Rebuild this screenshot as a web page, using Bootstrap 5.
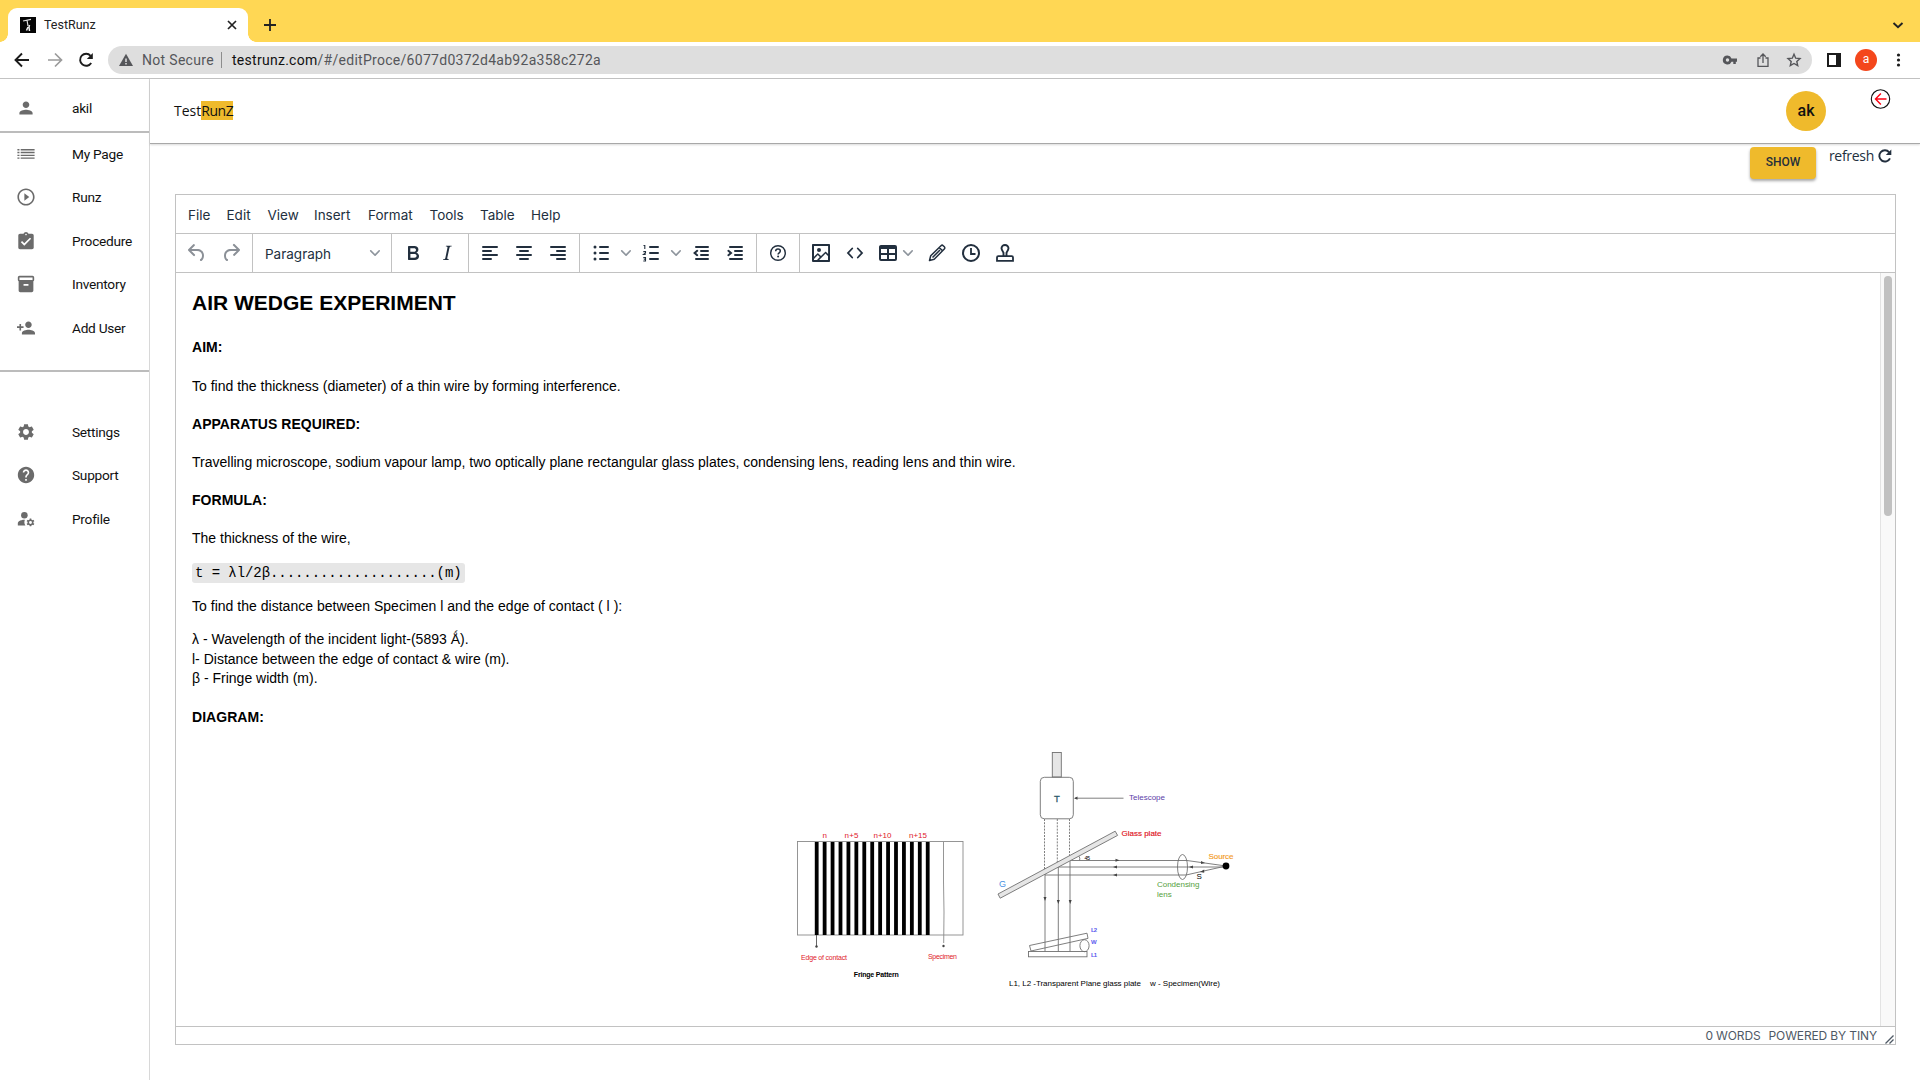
<!DOCTYPE html>
<html lang="en">
<head>
<meta charset="utf-8">
<title>TestRunz</title>
<link href="https://cdn.jsdelivr.net/npm/bootstrap@5.3.0/dist/css/bootstrap.min.css" rel="stylesheet">
<style>
body{width:1920px;height:1080px;overflow:hidden;background:#fff;color:#111;font-family:Roboto,sans-serif;font-size:14px;line-height:20px}
svg{display:block;flex:none;overflow:visible}
span,a{white-space:nowrap}
.tabstrip{height:42px;background:#ffd754;padding:8px 17px 0 8px}
.browser-tab{width:240px;height:34px;background:#fff;border-radius:9px 9px 0 0;padding:0 10px 0 12px;font-size:12.5px;position:relative}
.browser-tab::before,.browser-tab::after{content:"";position:absolute;bottom:0;width:8px;height:8px}
.browser-tab::before{left:-8px;background:radial-gradient(circle at 0 0,transparent 7.5px,#fff 8px)}
.browser-tab::after{right:-8px;background:radial-gradient(circle at 100% 0,transparent 7.5px,#fff 8px)}
.tab-name{margin-left:8px;color:#222}
.new-tab{margin:11px 0 0 16px}
.tab-search{margin-top:12px}
.urlbar{height:37px;border-bottom:1px solid #c3c3c3;padding:0 17px 0 14px}
.nav-fwd{margin-left:17px}
.nav-reload{margin-left:15px}
.pill{height:28px;width:1704px;margin-left:14px;background:#dedede;border-radius:14px;padding:0 11px;color:#55565a;margin-bottom:1px}
.pill .sep{width:1px;height:16px;background:#8d8d8d;margin:0 10px 0 7px}
.pill b{font-weight:400;color:#111}
.insecure{margin-left:9px;letter-spacing:.31px}
.address{letter-spacing:.28px}
.ico-share{margin-left:20px}
.ico-star{margin-left:18px}
.ico-panel{margin-left:15px}
.chrome-user{width:22px;height:22px;margin-left:14px;background:#f4471c;color:#fff;font-size:12px;line-height:21px}
.sidebar{width:150px;border-right:1px solid #d8d8d8}
.sidebar .item{height:43.5px;padding-left:17px;font-size:13.7px;letter-spacing:-.27px}
.sidebar .item svg{width:18px;height:18px;fill:#6b6b6b;margin-right:37px}
.sidebar .item.owner{height:52px;padding-top:6px}
.rule{height:2px;background:#bcbcbc;margin-bottom:-1px}
.rule.split{margin:20px 0 38.500px}
.topbar{height:65px;border-bottom:1px solid #a8a8a8;box-shadow:0 1px 2px rgba(0,0,0,.15);padding:0 29px 0 24px}
.brand{font-family:"Open Sans",sans-serif;color:#111;margin-top:22px}
.brand i{font-style:normal;background:#efba2c;display:inline-block;line-height:19px;letter-spacing:-.45px}
.ak{width:40px;height:40px;margin-top:12px;background:#efba2c;color:#111;font-size:16px;font-weight:500;line-height:39px;margin-right:45px}
.leave{margin:10px 1px 0 0}
.actions{height:50px;padding:3px 28px 0 0}
.show-btn{width:66px;height:32px;padding:0;border:0;border-radius:4px;background:#efba2c;color:#27303a;font-size:12px;font-weight:500;line-height:29px;padding-bottom:2px;margin-right:13px;box-shadow:0 2px 3px rgba(0,0,0,.35)}
.refresh{color:#222f3e;font-family:"Open Sans",sans-serif;height:18px;letter-spacing:-.3px}
.refresh svg{margin-left:4px}
.editor{width:1721px;height:851px;margin-left:25px;border:1px solid #c2c2c2;font-family:Inter,sans-serif;color:#222f3e;font-size:13.5px}
.menus{height:39px;border-bottom:1px solid #c2c2c2;padding:2px 0 0 12px}
.menus span{display:block}
.tools{height:39px;border-bottom:1px solid #c2c2c2}
.tools .grp{border-right:1px solid #c2c2c2}
.tools .grp:last-child{border:0}
.tb{width:34px;display:flex;justify-content:center}
.tb svg{width:24px;height:24px;fill:#222f3e}
.tb .off{fill:#8b9097}
.ln{stroke:#222f3e;stroke-width:2;stroke-linecap:round;fill:none}
.chev{width:16px;display:flex;justify-content:center}
.chev svg{width:10px;height:10px;fill:#8e959d}
.para-name{padding-top:2px}
.doc{font-family:"Liberation Sans",Arial,sans-serif;color:#000;font-size:14px;padding:0 0 0 16px;overflow:hidden}
.doc p,.doc h2,.doc h4{margin:18px 0 0;line-height:20px;font-size:14px}
.doc h4,.doc h2{font-weight:700}
.doc h4{letter-spacing:.04px}
.doc h2{font-size:21px;line-height:28px;margin-top:16px}
.doc .wide{margin-top:19px}
.doc .after-title{margin-top:20px}
.doc .after-code{margin-top:13px;letter-spacing:.02px}
.doc .flush{margin-top:0}
.doc .tight{margin-top:-1px}
.formula{font-family:"Liberation Mono",monospace;background:#e6e6e6;border-radius:3px;height:20px;line-height:21px;padding:0 3px;width:273px;margin-top:15px;letter-spacing:-.07px}
.figure-air{margin:13px 0 0 588px}
.track{width:15px;background:#f9f9f9;border-left:1px solid #e3e3e3;padding:3px 0 0 3px}
.thumb{width:8px;height:240px;border-radius:4px;background:#c1c1c1}
.status{height:18px;border-top:1px solid #c2c2c2;font-size:12px;color:#4f5965;padding-right:1px;line-height:18px;letter-spacing:-.13px}
.status span{margin-right:8px}
.status svg{margin-top:8px}
</style>
</head>
<body class="d-flex flex-column">
<div class="tabstrip d-flex align-items-start">
  <div class="browser-tab d-flex align-items-center">
    <svg width="16" height="16"><rect width="16" height="16" fill="#050505"/><path d="M3 4 L11 2.300 M7 3 L8 9" stroke="#ddd" stroke-width="1.200" fill="none"/><path d="M9.500 8l-.5 2 .5 4M8 10l-1.500 3.500" stroke="#eee" stroke-width="1.500" fill="none"/></svg>
    <span class="tab-name">TestRunz</span>
    <svg class="ms-auto" width="12" height="12"><path d="M2 2l8 8M10 2l-8 8" stroke="#222" stroke-width="1.700"/></svg>
  </div>
  <svg class="new-tab" width="12" height="12"><path d="M6 0v12M0 6h12" stroke="#222" stroke-width="1.800"/></svg>
  <svg class="ms-auto tab-search" width="10" height="10"><path d="M.5 3l4.500 4.300L9.500 3" stroke="#222" stroke-width="1.900" fill="none"/></svg>
</div>
<div class="urlbar d-flex align-items-center">
  <svg width="16" height="16"><path d="M15 8H2M8 1.500L1.500 8L8 14.500" stroke="#1c1c1c" stroke-width="1.900" fill="none"/></svg>
  <svg class="nav-fwd" width="16" height="16"><path d="M1 8h13M8 1.500L14.500 8L8 14.500" stroke="#9b9b9b" stroke-width="1.700" fill="none"/></svg>
  <svg class="nav-reload" width="16" height="16"><path d="M13.200 11a6 6 0 1 1-.6-7.200" stroke="#1c1c1c" stroke-width="1.900" fill="none"/><path d="M14.800 1v6H8.800z" fill="#1c1c1c"/></svg>
  <div class="pill d-flex align-items-center">
    <svg width="14" height="14"><path d="M7 .8L14 13H0z" fill="#55565a"/><path d="M7 5.500v3.500M7 10v1.500" stroke="#dedede" stroke-width="1.500"/></svg>
    <span class="insecure">Not Secure</span><div class="sep"></div>
    <span class="address"><b>testrunz.com</b>/#/editProce/6077d0372d4ab92a358c272a</span>
    <svg class="ms-auto" width="14" height="10"><path fill="#55565a" fill-rule="evenodd" d="M4.500.5a4.500 4.500 0 1 0 4 6.200h1.800V9h2.500V6.700H14V3.500H8.500a4.500 4.500 0 0 0-4-3zm0 2.800a1.700 1.700 0 1 1 0 3.400 1.700 1.700 0 0 1 0-3.400z"/></svg>
    <svg class="ico-share" width="12" height="14"><path d="M3.500 5H1v8.300h10V5H8.500M6 10V1.200M3.300 3.700L6 1l2.700 2.700" stroke="#55565a" stroke-width="1.300" fill="none"/></svg>
    <svg class="ico-star" width="14" height="14"><path d="M7 1.300l1.700 3.900 4.300.4-3.200 2.900.9 4.200L7 10.500l-3.700 2.200.9-4.200L1 5.600l4.300-.4z" stroke="#55565a" stroke-width="1.400" fill="none"/></svg>
  </div>
  <svg class="ico-panel" width="14" height="14"><path fill="#1c1c1c" fill-rule="evenodd" d="M0 0h14v14H0zM2 2v10h7V2z"/></svg>
  <div class="chrome-user rounded-circle text-center">a</div>
  <svg class="ms-auto" width="9" height="14"><g fill="#1c1c1c"><circle cx="4.500" cy="2" r="1.600"/><circle cx="4.500" cy="7" r="1.600"/><circle cx="4.500" cy="12" r="1.600"/></g></svg>
</div>
<div class="d-flex flex-grow-1">
  <nav class="sidebar flex-shrink-0">
    <div class="item owner d-flex align-items-center"><svg viewBox="0 0 24 24"><path d="M12 12c2.210 0 4-1.790 4-4s-1.790-4-4-4-4 1.790-4 4 1.790 4 4 4zm0 2c-2.670 0-8 1.340-8 4v2h16v-2c0-2.660-5.330-4-8-4z" transform="translate(-1.200 -1.200) scale(1.100)"/></svg><span>akil</span></div>
    <div class="rule"></div>
    <div class="item d-flex align-items-center"><svg viewBox="1 1 22 22"><path d="M1.500 6H4v1.700H1.500zm0 3.400H4v1.700H1.500zm0 3.400H4v1.700H1.500zm0 3.400H4v1.700H1.500zM5.500 6h17v1.700h-17zm0 3.400h17v1.700h-17zm0 3.400h17v1.700h-17zm0 3.400h17v1.700h-17z"/></svg><span>My Page</span></div>
    <div class="item d-flex align-items-center"><svg viewBox="1 1 22 22"><path d="M10 16.500l6-4.500-6-4.500v9zM12 1.500C6.200 1.500 1.500 6.200 1.500 12S6.200 22.500 12 22.500 22.500 17.800 22.500 12 17.800 1.500 12 1.500zm0 19c-4.700 0-8.500-3.800-8.500-8.500S7.300 3.500 12 3.500s8.500 3.800 8.500 8.500-3.800 8.500-8.500 8.500z"/></svg><span>Runz</span></div>
    <div class="item d-flex align-items-center"><svg viewBox="2 1 20 21"><path d="M19 3h-4.180C14.400 1.840 13.300 1 12 1c-1.300 0-2.400.84-2.820 2H5c-1.100 0-2 .9-2 2v14c0 1.100.9 2 2 2h14c1.100 0 2-.9 2-2V5c0-1.100-.9-2-2-2zm-7 0c.55 0 1 .45 1 1s-.45 1-1 1-1-.45-1-1 .45-1 1-1zm-2 14l-4-4 1.410-1.410L10 14.170l6.590-6.590L18 9l-8 8z"/></svg><span>Procedure</span></div>
    <div class="item d-flex align-items-center"><svg viewBox="1 1 22 22"><path d="M20 2H4c-1 0-2 .9-2 2v3.010c0 .72.43 1.340 1 1.690V20c0 1.100 1.100 2 2 2h14c.9 0 2-.9 2-2V8.700c.57-.35 1-.97 1-1.690V4c0-1.100-1-2-2-2zm-5 12H9v-2h6v2zm5-7H4V4h16v3z"/></svg><span>Inventory</span></div>
    <div class="item d-flex align-items-center"><svg viewBox="1 1 22 22"><path d="M15 12c2.210 0 4-1.790 4-4s-1.790-4-4-4-4 1.790-4 4 1.790 4 4 4zm-9-2V7H4v3H1v2h3v3h2v-3h3v-2H6zm9 4c-2.670 0-8 1.340-8 4v2h16v-2c0-2.660-5.330-4-8-4z"/></svg><span>Add User</span></div>
    <div class="rule split"></div>
    <div class="item d-flex align-items-center"><svg viewBox="1 1 22 22"><path d="M19.140 12.940c.04-.3.060-.61.060-.94 0-.32-.02-.64-.07-.94l2.030-1.580c.18-.14.230-.41.120-.61l-1.920-3.320c-.12-.22-.37-.29-.59-.22l-2.390.96c-.5-.38-1.030-.7-1.620-.94l-.36-2.540c-.04-.24-.24-.41-.48-.41h-3.840c-.24 0-.43.170-.47.410l-.36 2.540c-.59.240-1.130.57-1.620.94l-2.390-.96c-.22-.08-.47 0-.59.220L2.740 8.870c-.12.210-.08.470.120.610l2.030 1.580c-.05.3-.09.630-.09.940s.02.640.070.940l-2.030 1.580c-.18.140-.23.410-.12.610l1.920 3.320c.12.220.37.290.59.220l2.390-.96c.5.380 1.030.7 1.620.94l.36 2.540c.05.240.24.410.48.410h3.840c.24 0 .44-.17.470-.41l.36-2.540c.59-.24 1.130-.56 1.620-.94l2.390.96c.22.080.47 0 .59-.22l1.920-3.320c.12-.22.070-.47-.12-.61l-2.010-1.580zM12 15.600c-1.980 0-3.600-1.620-3.600-3.600s1.620-3.600 3.600-3.600 3.600 1.620 3.600 3.600-1.620 3.600-3.600 3.600z"/></svg><span>Settings</span></div>
    <div class="item d-flex align-items-center"><svg viewBox="1 1 22 22"><path d="M12 2C6.480 2 2 6.480 2 12s4.480 10 10 10 10-4.480 10-10S17.520 2 12 2zm1 17h-2v-2h2v2zm2.070-7.750l-.9.920C13.450 12.900 13 13.500 13 15h-2v-.5c0-1.100.45-2.100 1.170-2.830l1.240-1.260c.37-.36.590-.86.590-1.410 0-1.100-.9-2-2-2s-2 .9-2 2H8c0-2.210 1.790-4 4-4s4 1.790 4 4c0 .88-.36 1.680-.93 2.250z"/></svg><span>Support</span></div>
    <div class="item d-flex align-items-center"><svg viewBox="1 1 22 22"><circle cx="10" cy="7.500" r="4"/><path d="M10.670 13.020C10.450 13.010 10.230 13 10 13c-2.420 0-4.680.67-6.610 1.820C2.510 15.340 2 16.320 2 17.350V20h9.260A6.960 6.960 0 0 1 10 16c0-1.070.25-2.070.67-2.980z"/><circle cx="17.500" cy="16.300" r="2.700" fill="none" stroke="#6b6b6b" stroke-width="1.900"/><path fill="none" stroke="#6b6b6b" stroke-width="2" d="M17.500 11.500v2M17.500 19v2M13.300 13.900l1.700 1M20 17.700l1.700 1M13.300 18.700l1.700-1M20 14.900l1.700-1"/></svg><span>Profile</span></div>
  </nav>
  <main class="flex-grow-1">
    <div class="topbar d-flex align-items-start">
      <span class="brand">Test<i>RunZ</i></span>
      <div class="ak rounded-circle text-center ms-auto">ak</div>
      <svg class="leave" width="19" height="20"><circle cx="9.500" cy="10" r="9.200" stroke="#111" fill="none" stroke-width="1.100"/><path d="M15.500 10H4.700M9.900 4.600L4.500 10l5.400 5.400" stroke="#f01" stroke-width="1.400" fill="none"/></svg>
    </div>
    <div class="actions d-flex align-items-start justify-content-end">
      <button class="btn show-btn">SHOW</button>
      <div class="refresh d-flex align-items-center"><span>refresh</span><svg width="14" height="14"><path d="M12 9.300a5.600 5.600 0 1 1-.8-6" stroke="#222f3e" stroke-width="1.900" fill="none"/><path d="M13.300.5v5.500H7.800z" fill="#222f3e"/></svg></div>
    </div>
    <section class="editor d-flex flex-column">
      <div class="menus d-flex align-items-center">
        <span style="width:38.500px">File</span><span style="width:41px">Edit</span><span style="width:46.500px">View</span><span style="width:54px">Insert</span><span style="width:61.500px">Format</span><span style="width:50.500px">Tools</span><span style="width:51px">Table</span><span>Help</span>
      </div>
      <div class="tools d-flex">
        <div class="grp d-flex align-items-center justify-content-center" style="width:77px">
          <div class="tb"><svg class="off" viewBox="0 0 24 24"><path d="M6.400 8H12c3.700 0 6.200 2 6.800 5.100.6 2.700-.4 5.600-2.300 6.800a1 1 0 01-1-1.800c1.100-.6 1.800-2.700 1.400-4.600-.5-2.100-2.100-3.500-4.900-3.500H6.400l3.300 3.300a1 1 0 11-1.400 1.400l-5-5a1 1 0 010-1.400l5-5a1 1 0 011.400 1.400L6.400 8z"/></svg></div>
          <div class="tb"><svg class="off" viewBox="0 0 24 24"><path d="M17.600 10H12c-2.800 0-4.400 1.400-4.900 3.500-.4 2 .3 4 1.400 4.600a1 1 0 11-1 1.800c-2-1.200-2.900-4.100-2.300-6.800.6-3 3-5.100 6.800-5.100h5.600l-3.300-3.300a1 1 0 111.400-1.400l5 5a1 1 0 010 1.400l-5 5a1 1 0 01-1.400-1.400l3.300-3.300z"/></svg></div>
        </div>
        <div class="grp d-flex align-items-center justify-content-between" style="width:139px;padding:0 8px 0 12px"><span class="para-name">Paragraph</span><div class="chev"><svg viewBox="0 0 10 10"><path d="M8.700 2.200c.3-.3.8-.3 1 0 .4.4.4.9 0 1.200L5.700 7.800c-.3.3-.9.3-1.200 0L.2 3.400a.8.8 0 010-1.200c.3-.3.8-.3 1.100 0L5 6l3.700-3.800z"/></svg></div></div>
        <div class="grp d-flex align-items-center justify-content-center" style="width:77px">
          <div class="tb"><svg viewBox="0 0 24 24"><path fill-rule="evenodd" d="M7.800 19c-.3 0-.5 0-.6-.2l-.2-.5V5.700c0-.2 0-.4.2-.5l.6-.2h5c1.500 0 2.700.3 3.500 1 .7.600 1.100 1.400 1.100 2.500a3 3 0 01-.6 1.900c-.4.600-1 1-1.600 1.200.4.100.9.300 1.300.6s.8.700 1 1.200c.4.400.5 1 .5 1.600 0 1.300-.4 2.300-1.300 3-.8.700-2.100 1-3.800 1H7.800zm5-8.300c.6 0 1.200-.1 1.600-.5.4-.3.6-.7.6-1.300 0-1.100-.8-1.700-2.300-1.700H9.300v3.500h3.400zm.5 6c.7 0 1.300-.1 1.700-.4.4-.4.6-.9.6-1.500s-.2-1-.7-1.400c-.4-.3-1-.4-2-.4H9.400v3.800h4z"/></svg></div>
          <div class="tb"><svg viewBox="0 0 24 24"><path d="M16.700 4.700l-.1.900h-.3c-.6 0-1 0-1.400.3-.3.300-.4.600-.5 1.100l-2.100 9.800v.6c0 .5.4.8 1.400.8h.2l-.2.800H8l.2-.8h.2c1.100 0 1.800-.5 2-1.500l2-9.800.1-.5c0-.6-.4-.8-1.400-.8h-.3l.2-.9h5.700z"/></svg></div>
        </div>
        <div class="grp d-flex align-items-center justify-content-center" style="width:111px">
          <div class="tb"><svg viewBox="0 0 24 24"><path class="ln" d="M5 6h14M5 10h8M5 14h14M5 18h8"/></svg></div>
          <div class="tb"><svg viewBox="0 0 24 24"><path class="ln" d="M5 6h14M8 10h8M5 14h14M8 18h8"/></svg></div>
          <div class="tb"><svg viewBox="0 0 24 24"><path class="ln" d="M5 6h14M11 10h8M5 14h14M11 18h8"/></svg></div>
        </div>
        <div class="grp d-flex align-items-center" style="width:177px;padding-left:4px">
          <div class="tb"><svg viewBox="0 0 24 24"><path class="ln" d="M11 6h8M11 12h8M11 18h8"/><circle cx="6" cy="6" r="1.500"/><circle cx="6" cy="12" r="1.500"/><circle cx="6" cy="18" r="1.500"/></svg></div>
          <div class="chev"><svg viewBox="0 0 10 10"><path d="M8.700 2.200c.3-.3.8-.3 1 0 .4.4.4.9 0 1.200L5.700 7.800c-.3.3-.9.3-1.200 0L.2 3.400a.8.8 0 010-1.200c.3-.3.8-.3 1.100 0L5 6l3.700-3.800z"/></svg></div>
          <div class="tb"><svg viewBox="0 0 24 24"><path class="ln" d="M11 6h8M11 12h8M11 18h8"/><path d="M4.500 4.500h1.300V8M4.300 10.600h2.200v1.300l-2 1.600h2.200M4.300 16.600h2.200v3.400H4.300M4.800 18.300h1.700" fill="none" stroke="#222f3e" stroke-width="1.100"/></svg></div>
          <div class="chev"><svg viewBox="0 0 10 10"><path d="M8.700 2.200c.3-.3.8-.3 1 0 .4.4.4.9 0 1.200L5.700 7.800c-.3.3-.9.3-1.200 0L.2 3.400a.8.8 0 010-1.200c.3-.3.8-.3 1.100 0L5 6l3.700-3.800z"/></svg></div>
          <div class="tb"><svg viewBox="0 0 24 24"><path class="ln" d="M7 6h12M12 10h7M12 14h7M7 18h12M8.200 9.800L5.600 12l2.600 2.200"/></svg></div>
          <div class="tb"><svg viewBox="0 0 24 24"><path class="ln" d="M7 6h12M12 10h7M12 14h7M7 18h12M5.400 9.800L8 12l-2.600 2.200"/></svg></div>
        </div>
        <div class="grp d-flex align-items-center justify-content-center" style="width:43px">
          <div class="tb"><svg viewBox="0 0 24 24"><circle cx="12" cy="12" r="7.300" fill="none" stroke="#222f3e" stroke-width="1.400"/><path d="M9.700 10.300c0-1.400 1-2.200 2.300-2.200s2.300.8 2.300 2c0 1.700-2.200 1.700-2.200 3.400" fill="none" stroke="#222f3e" stroke-width="1.500"/><circle cx="12.100" cy="15.600" r="1"/></svg></div>
        </div>
        <div class="grp d-flex align-items-center" style="padding-left:4px">
          <div class="tb"><svg viewBox="0 0 24 24"><path fill-rule="evenodd" d="M5 15.700l3.300-3.200c.3-.3.700-.3 1 0L12 15l4.100-4c.3-.4.8-.4 1 0l2 1.900V5H5v10.700zM5 18V19h3l2.800-2.900-2-2L5 17.900zm14-3l-2.500-2.400-6.400 6.500H19v-4zM4 3h16c.6 0 1 .4 1 1v16c0 .6-.4 1-1 1H4a1 1 0 01-1-1V4c0-.6.4-1 1-1zm6 8a2 2 0 100-4 2 2 0 000 4z"/></svg></div>
          <div class="tb"><svg viewBox="0 0 24 24"><path class="ln" style="stroke-width:1.800" d="M9.200 7.500L5 12l4.200 4.500M14.800 7.500L19 12l-4.200 4.500"/></svg></div>
          <div class="tb" style="width:32px"><svg viewBox="0 0 24 24"><path fill-rule="evenodd" d="M19 4a2 2 0 012 2v12a2 2 0 01-2 2H5a2 2 0 01-2-2V6c0-1.100.9-2 2-2h14zM5 14v4h6v-4H5zm14 0h-6v4h6v-4zm0-6h-6v4h6V8zM5 12h6V8H5v4z"/></svg></div>
          <div class="chev" style="width:8px;margin-right:8px"><svg viewBox="0 0 10 10"><path d="M8.700 2.200c.3-.3.8-.3 1 0 .4.4.4.9 0 1.200L5.700 7.800c-.3.3-.9.3-1.200 0L.2 3.400a.8.8 0 010-1.200c.3-.3.8-.3 1.100 0L5 6l3.700-3.800z"/></svg></div>
          <div class="tb"><svg viewBox="0 0 24 24"><path d="M4.500 19.500l1.200-4.700L16 4.700c.7-.7 1.500-.7 2.200 0l1.100 1.100c.7.700.7 1.500 0 2.200L9.200 18.300zM14.200 6.500l3.300 3.300M7.500 16.500l7.500-7.500" fill="none" stroke="#222f3e" stroke-width="1.500" stroke-linejoin="round"/></svg></div>
          <div class="tb"><svg viewBox="0 0 24 24"><circle cx="12" cy="12" r="8" fill="none" stroke="#222f3e" stroke-width="2"/><path d="M12 7v6h4.500" fill="none" stroke="#222f3e" stroke-width="1.800"/></svg></div>
          <div class="tb"><svg viewBox="0 0 24 24"><path d="M10.500 15v-3.200C9.300 10 8.500 8.700 8.500 7.300a3.500 3.300 0 0 1 7 0c0 1.400-.8 2.700-2 4.500V15" fill="none" stroke="#222f3e" stroke-width="1.900"/><path d="M4 19.800v-3.300c0-.8.500-1.300 1.300-1.300h13.400c.8 0 1.300.5 1.300 1.300v3.300z" fill="none" stroke="#222f3e" stroke-width="1.800"/></svg></div>
        </div>
      </div>
      <div class="d-flex flex-grow-1 overflow-hidden">
        <div class="doc flex-grow-1">
          <h2>AIR WEDGE EXPERIMENT</h2>
          <h4 class="after-title">AIM:</h4>
          <p class="wide">To find the thickness (diameter) of a thin wire by forming interference.</p>
          <h4>APPARATUS REQUIRED:</h4>
          <p>Travelling microscope, sodium vapour lamp, two optically plane rectangular glass plates, condensing lens, reading lens and thin wire.</p>
          <h4>FORMULA:</h4>
          <p>The thickness of the wire,</p>
          <div class="formula"><span>t = λl/2β....................(m)</span></div>
          <p class="after-code">To find the distance between Specimen l and the edge of contact ( l ):</p>
          <p class="after-code">λ - Wavelength of the incident light-(5893 Ǻ).</p>
          <p class="flush">l- Distance between the edge of contact &amp; wire (m).</p>
          <p class="tight">β - Fringe width (m).</p>
          <h4 class="wide">DIAGRAM:</h4>
          <svg class="figure-air" width="470" height="250" viewBox="780 740 470 250" font-family="Liberation Sans" font-size="8">
            <g fill="none" stroke="#8a8a8a" stroke-width=".9"><rect x="797.500" y="841.500" width="165.500" height="93.500"/><path d="M943.500 842v40l.5 30-.3 31"/><path d="M816.500 935v11" stroke="#555"/></g>
            <path d="M816.700 842v93M824.630 842v93M832.560 842v93M840.490 842v93M848.420 842v93M856.350 842v93M864.280 842v93M872.210 842v93M880.140 842v93M888.070 842v93M896 842v93M903.930 842v93M911.860 842v93M919.790 842v93M927.720 842v93" stroke="#000" stroke-width="3.800"/>
            <circle cx="816.500" cy="946.500" r="1.200" fill="#444"/><circle cx="943.500" cy="946" r="1.200" fill="#444"/>
            <g fill="#e0202a" text-anchor="middle"><text x="824.800" y="838.300">n</text><text x="851.500" y="838.300" textLength="14">n+5</text><text x="882.500" y="838.300" textLength="18">n+10</text><text x="918" y="838.300" textLength="18">n+15</text><text x="824" y="960" font-size="7" textLength="46">Edge of contact</text><text x="942.500" y="959" font-size="7" textLength="29">Specimen</text></g>
            <text x="876.300" y="976.700" font-size="7" font-weight="700" text-anchor="middle" textLength="45">Fringe Pattern</text>
            <g fill="none" stroke="#707070" stroke-width=".9">
              <rect x="1052.300" y="752.500" width="9" height="24.500" fill="#e6e6e6"/><rect x="1040.300" y="777.300" width="33" height="41.500" rx="4"/>
              <path d="M1075 798.200h48.500"/>
              <path d="M1044.500 819v54M1057.300 819v47M1069.500 819v40" stroke-dasharray="2 1.200"/>
              <path d="M1045 874v77.500M1058.300 867v84.500M1070 861v90.500M1069 860.500h118l39 5.500M1058 867h168M1045 875h141l40-9"/>
              <path d="M1115.200 831.200l2.400 4.200-117.400 62.800-2.200-4.200z" fill="#e6e6e6"/>
              <ellipse cx="1182.500" cy="867" rx="5" ry="12.500"/>
              <rect x="1028.500" y="951.500" width="58.500" height="5.300"/><path d="M1029.500 945.500l57.500-12.300 1 5.200-57 12.600zM1079 856.300q1.300 1.700.6 4"/>
              <ellipse cx="1084.500" cy="945.700" rx="4.600" ry="6"/>
            </g>
            <path fill="#444" d="M1074 798.200l3.500-1.600v3.200zM1113 867l4-1.500v3zM1113 875l4-1.500v3zM1119.500 860.200l-4-1.500v3zM1045 901l-1.500-4h3zM1058.300 904l-1.500-4h3zM1070.200 904l-1.500-4h3zM1189 867l4-1.500v3zM1205 863l-4-2v3zM1200 872l4.200-2.500v3.200z"/>
            <circle cx="1226" cy="866" r="3.400"/>
            <text x="1056.800" y="801.500" fill="#2c5a6c" text-anchor="middle" font-size="9.500" stroke="#2c5a6c" stroke-width=".3">T</text>
            <text x="1129" y="799.500" fill="#5b3ea8" textLength="36">Telescope</text>
            <text x="1121.500" y="835.500" fill="#e0101a" stroke="#e0101a" stroke-width=".15" textLength="40">Glass plate</text>
            <text x="1208.500" y="859" fill="#f39a1e" stroke="#f39a1e" stroke-width=".15" textLength="25">Source</text>
            <text x="1157" y="887" fill="#55a040" textLength="42.500">Condensing</text><text x="1157" y="896.500" fill="#55a040">lens</text>
            <text x="1196.500" y="879">S</text><text x="999" y="887" font-size="9" fill="#4a90e2">G</text><text x="1084.500" y="860" font-size="5.500" textLength="5.500">45</text>
            <g font-size="6" fill="#5a5aee" font-weight="700"><text x="1091" y="931.500" textLength="6">L2</text><text x="1091" y="944" textLength="5">W</text><text x="1091" y="956.500" textLength="6">L1</text></g>
            <text x="1009" y="986" textLength="132">L1, L2 -Transparent Plane glass plate</text><text x="1150" y="986" textLength="70">w - Specimen(Wire)</text>
          </svg>
        </div>
        <div class="track"><div class="thumb"></div></div>
      </div>
      <div class="status d-flex justify-content-end"><span>0 WORDS</span><span>POWERED BY TINY</span><svg width="9" height="9"><path d="M.5 8.500l8-8M4.500 8.500l4-4" stroke="#4f5965" stroke-width="1.300"/></svg></div>
    </section>
  </main>
</div>
<script src="https://cdn.jsdelivr.net/npm/bootstrap@5.3.0/dist/js/bootstrap.bundle.min.js"></script>
</body>
</html>
